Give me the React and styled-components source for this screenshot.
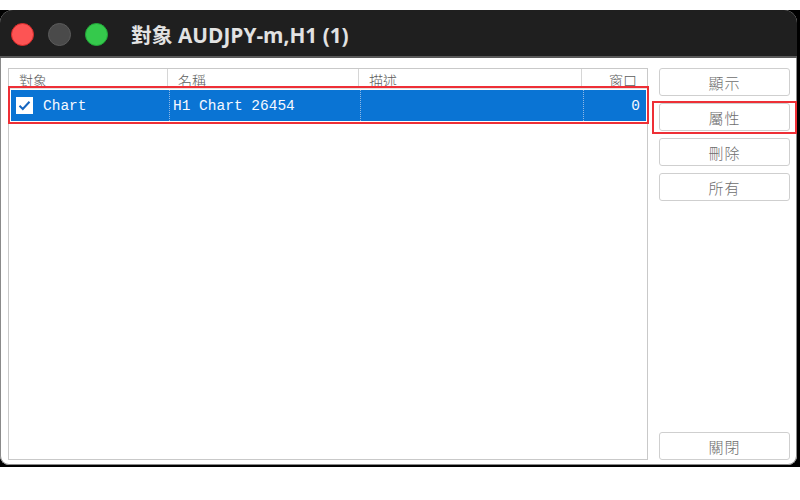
import React from 'react';
import styled, {createGlobalStyle} from 'styled-components';

const GlobalStyle = createGlobalStyle`
  html, body {
    margin: 0;
    padding: 0;
    background: #fff;
  }
  body {
    font-family: "Noto Sans CJK TC", "Noto Sans", sans-serif;
  }
`;

const CJK = `"Noto Sans CJK TC", "Noto Sans CJK SC", sans-serif`;
const MONO = `"Liberation Mono", "DejaVu Sans Mono", "Noto Sans CJK TC", monospace`;

const columns = [
  {key: 'object', title: '對象', width: '158px'},
  {key: 'name', title: '名稱', width: '191px'},
  {key: 'desc', title: '描述', width: '223px'},
  {key: 'window', title: '窗口', width: '1fr', right: true},
];

const rows = [
  {id: 1, checked: true, object: 'Chart', name: 'H1 Chart 26454', desc: '', window: '0'},
];

const buttons = [
  {label: '顯示'},
  {label: '屬性', marked: true},
  {label: '刪除'},
  {label: '所有'},
];

class App extends React.PureComponent {
  render() {
    const grid = columns.map(c => c.width).join(' ');
    return (
      <Page>
        <GlobalStyle/>
        <Backdrop>
          <Window>
            <TitleBar>
              <Lights>
                <Light color='#fd5454' ring='#d92b2b'/>
                <Light color='#4a4a4a' ring='#5c5c5c'/>
                <Light color='#35c94c' ring='#22a83a'/>
              </Lights>
              <Title>對象 AUDJPY-m,H1 (1)</Title>
            </TitleBar>
            <Body>
              <ListBox>
                <HeaderRow grid={grid}>
                  {
                    columns.map((col) => (
                      <HeaderCell key={col.key} right={col.right}>{col.title}</HeaderCell>
                    ))
                  }
                </HeaderRow>
                {
                  rows.map((row) => (
                    <DataRow key={row.id} grid={grid}>
                      <Cell first>
                        <CheckBox>
                          {row.checked && (
                            <svg width='13' height='11' viewBox='0 0 13 11'>
                              <path d='M1.5 5.8 L4.8 9 L11.5 1.8' fill='none' stroke='#1666c0' strokeWidth='2'/>
                            </svg>
                          )}
                        </CheckBox>
                        {row.object}
                      </Cell>
                      <Cell>{row.name}</Cell>
                      <Cell>{row.desc}</Cell>
                      <Cell right>{row.window}</Cell>
                    </DataRow>
                  ))
                }
              </ListBox>
              <Side>
                {
                  buttons.map((b) => (
                    <Button key={b.label} marked={b.marked}>{b.label}</Button>
                  ))
                }
                <Spacer/>
                <Button>關閉</Button>
              </Side>
            </Body>
          </Window>
        </Backdrop>
      </Page>
    );
  }
}

const Page = styled.div`
  width: 800px;
  height: 500px;
  padding-top: 10px;
  box-sizing: border-box;
`;

const Backdrop = styled.div`
  width: 800px;
  height: 457px;
  background: #000;
`;

const Window = styled.div`
  width: 797px;
  height: 455px;
  background: #fff;
  border-radius: 13px 13px 9px 9px;
  overflow: hidden;
  display: flex;
  flex-direction: column;
  box-shadow: inset 0 0 0 1px #8a8a8a;
`;

const TitleBar = styled.div`
  height: 46px;
  flex: none;
  background: #1f1f1f;
  border-bottom: 2px solid #5a5a5a;
  display: flex;
  align-items: center;
  padding-left: 11px;
`;

const Lights = styled.div`
  display: flex;
  gap: 14px;
  margin-top: 2px;
`;

const Light = styled.span`
  display: block;
  width: 23px;
  height: 23px;
  border-radius: 50%;
  background: ${props => props.color};
  border: 1px solid ${props => props.ring};
  box-sizing: border-box;
`;

const Title = styled.div`
  margin-left: 23px;
  margin-top: 1px;
  color: #e2e2e2;
  font-family: "Open Sans", ${CJK};
  font-weight: bold;
  font-size: 20.8px;
`;

const Body = styled.div`
  flex: 1;
  display: flex;
  padding: 10px 7px 5px 8px;
  min-height: 0;
`;

const ListBox = styled.div`
  width: 640px;
  flex: none;
  border: 1px solid #c9c9c9;
  box-sizing: border-box;
  display: flex;
  flex-direction: column;
`;

const HeaderRow = styled.div`
  display: grid;
  grid-template-columns: ${props => props.grid};
  height: 19px;
  border-bottom: 1px solid #e2e2e2;
  overflow: hidden;
`;

const HeaderCell = styled.div`
  font-family: ${CJK};
  font-size: 14px;
  font-weight: 300;
  color: #5c5c5c;
  line-height: 23px;
  padding: 0 10px;
  text-align: ${props => props.right ? 'right' : 'left'};
  & + & {
    border-left: 1px solid #d6d6d6;
  }
`;

const DataRow = styled.div`
  position: relative;
  display: grid;
  grid-template-columns: ${props => props.grid};
  height: 31px;
  margin: 1px 1px 0 2px;
  background: #0a74d4;
  color: #f6f9ff;
  &::after {
    content: '';
    position: absolute;
    inset: -4px -3px -3px -3px;
    border: 2px solid #ee2f36;
    pointer-events: none;
  }
`;

const Cell = styled.div`
  display: flex;
  align-items: center;
  justify-content: ${props => props.right ? 'flex-end' : 'flex-start'};
  gap: 10px;
  padding: 0 6px 0 ${props => props.first ? '5px' : '3px'};
  font-family: ${MONO};
  font-size: 14.5px;
  white-space: nowrap;
  & + & {
    border-left: 1px dotted #8fb8e6;
  }
`;

const CheckBox = styled.span`
  width: 17px;
  height: 17px;
  flex: none;
  background: #fff;
  display: flex;
  align-items: center;
  justify-content: center;
`;

const Side = styled.div`
  flex: 1;
  display: flex;
  flex-direction: column;
  gap: 7px;
  padding-left: 11px;
`;

const Spacer = styled.div`
  flex: 1;
`;

const Button = styled.div`
  position: relative;
  height: 28px;
  box-sizing: border-box;
  border: 1px solid #cfcfcf;
  border-radius: 3px;
  background: #fff;
  display: flex;
  align-items: center;
  justify-content: center;
  font-family: ${CJK};
  font-weight: 300;
  font-size: 15px;
  color: #6e6e6e;
  letter-spacing: 1px;
  &::after {
    content: '';
    display: ${props => props.marked ? 'block' : 'none'};
    position: absolute;
    inset: -3px -8px -4px -8px;
    border: 2px solid #ee2f36;
    pointer-events: none;
  }
`;

export default App;
